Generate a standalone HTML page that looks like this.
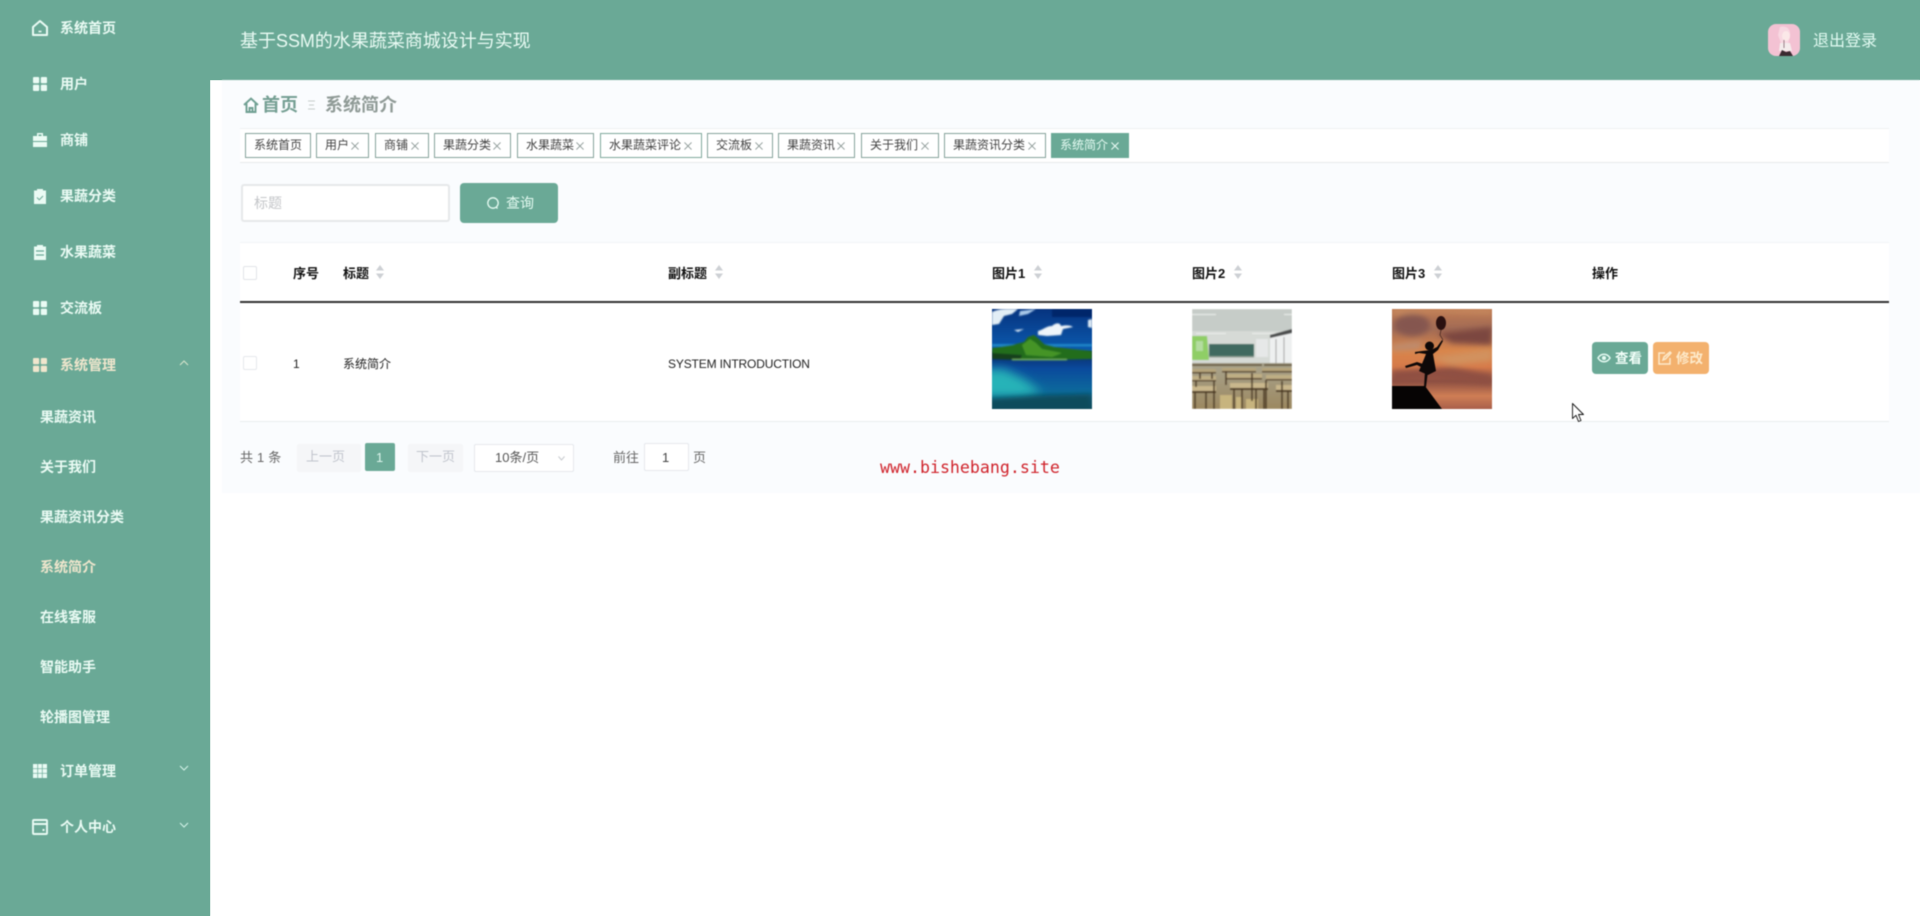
<!DOCTYPE html>
<html lang="zh-CN">
<head>
<meta charset="utf-8">
<title>基于SSM的水果蔬菜商城设计与实现</title>
<style>
html,body{margin:0;padding:0;width:1920px;height:916px;overflow:hidden;background:#fff}
body{position:relative;font-family:"Liberation Sans","Noto Sans CJK SC",sans-serif;color:#333}
#w{position:absolute;left:0;top:0;width:1920px;height:916px;filter:blur(.45px);overflow:hidden}
.a{position:absolute}
.t{position:absolute;white-space:nowrap;line-height:20px;height:20px}
.gs{left:0;top:0;width:210px;height:916px;background:#6aa996}
.gh{left:210px;top:0;width:1710px;height:80px;background:#6aa996}
#bg{left:222px;top:80px;width:1698px;height:413px;background:#fafcfe}
.m{left:60px;font-size:14px;font-weight:700;color:#eafbf4}
.s{left:40px;font-size:14px;font-weight:700;color:#eafbf4}
.i{position:absolute;left:32px;width:16px;height:16px;overflow:visible}
.tag{position:absolute;top:133px;height:23px;border:1px solid #86a29b;background:#fff;font-size:12px;line-height:23px;color:#444;padding-left:8px;white-space:nowrap;box-sizing:content-box}
.tag svg{position:absolute;right:9px;top:8px;width:8px;height:8px}
.th{font-size:13px;font-weight:700;color:#111}
.sort{position:absolute;width:8px;height:14px}
.td{font-size:12px;color:#222}
.pg{font-size:13px}
</style>
</head>
<body>
<div class="a gs"></div>
<div class="a gh"></div>
<div id="w">
<div id="bg" class="a"></div>
<div class="a gs"></div>
<div class="a gh"></div>

<!-- sidebar icons -->
<svg class="i" style="top:20px" viewBox="0 0 16 16" fill="none" stroke="#eafbf4" stroke-width="2"><path d="M1 7 8 1l7 6v8H1z" stroke-linejoin="round"/><path d="M6.500 11.500h3" stroke-width="1.500"/></svg>
<svg class="i" style="top:76px" viewBox="0 0 16 16" fill="#eafbf4"><rect x="1" y="1" width="6.200" height="6.200" rx="1"/><rect x="8.800" y="1" width="6.200" height="6.200" rx="1"/><rect x="1" y="8.800" width="6.200" height="6.200" rx="1"/><rect x="8.800" y="8.800" width="6.200" height="6.200" rx="1"/></svg>
<svg class="i" style="top:132px" viewBox="0 0 16 16" fill="#eafbf4"><path d="M5 1h6v3h-1.500V2.500h-3V4H5z"/><rect x="1" y="4" width="14" height="5"/><rect x="1" y="10" width="14" height="5"/></svg>
<svg class="i" style="top:188px" viewBox="0 0 16 16"><path d="M2 2.500h3V1h6v1.500h3V16H2z" fill="#eafbf4"/><path d="M5 9.500l2.300 2.300L11 8" stroke="#6aa996" stroke-width="1" fill="none"/></svg>
<svg class="i" style="top:244px" viewBox="0 0 16 16"><path d="M2 2.500h3V1h6v1.500h3V16H2z" fill="#eafbf4"/><path d="M4 7h8M4 11h8" stroke="#6aa996" stroke-width="1.300" fill="none"/></svg>
<svg class="i" style="top:300px" viewBox="0 0 16 16" fill="#eafbf4"><rect x="1" y="1" width="6.200" height="6.200" rx="1"/><rect x="8.800" y="1" width="6.200" height="6.200" rx="1"/><rect x="1" y="8.800" width="6.200" height="6.200" rx="1"/><rect x="8.800" y="8.800" width="6.200" height="6.200" rx="1"/></svg>
<svg class="i" style="top:357px" viewBox="0 0 16 16" fill="#efe6cd"><rect x="1" y="1" width="6.200" height="6.200" rx="1"/><rect x="8.800" y="1" width="6.200" height="6.200" rx="1"/><rect x="1" y="8.800" width="6.200" height="6.200" rx="1"/><rect x="8.800" y="8.800" width="6.200" height="6.200" rx="1"/></svg>
<svg class="i" style="top:763px" viewBox="0 0 16 16" fill="#eafbf4"><rect x="1" y="1" width="14" height="14"/><path d="M1 5.700h14M1 10.300h14M5.700 1v14M10.300 1v14" stroke="#6aa996" stroke-width=".7"/></svg>
<svg class="i" style="top:819px" viewBox="0 0 16 16" fill="none" stroke="#eafbf4" stroke-width="1.900"><rect x="1" y="1" width="14" height="14" rx="1"/><path d="M1 5h14M10.500 11h2"/></svg>

<!-- sidebar labels -->
<div class="t m" style="top:18px">系统首页</div>
<div class="t m" style="top:74px">用户</div>
<div class="t m" style="top:130px">商铺</div>
<div class="t m" style="top:186px">果蔬分类</div>
<div class="t m" style="top:242px">水果蔬菜</div>
<div class="t m" style="top:298px">交流板</div>
<div class="t m" style="top:355px;color:#efe6cd">系统管理</div>
<div class="t s" style="top:407px">果蔬资讯</div>
<div class="t s" style="top:457px">关于我们</div>
<div class="t s" style="top:507px">果蔬资讯分类</div>
<div class="t s" style="top:557px;color:#efe6cd">系统简介</div>
<div class="t s" style="top:607px">在线客服</div>
<div class="t s" style="top:657px">智能助手</div>
<div class="t s" style="top:707px">轮播图管理</div>
<div class="t m" style="top:761px">订单管理</div>
<div class="t m" style="top:817px">个人中心</div>
<svg class="a" style="left:179px;top:360px" width="10" height="6" viewBox="0 0 10 6" fill="none" stroke="#d9e6cd" stroke-width="1"><path d="M1 5 5 1l4 4"/></svg>
<svg class="a" style="left:179px;top:765px" width="10" height="6" viewBox="0 0 10 6" fill="none" stroke="#d5f5ea" stroke-width="1"><path d="M1 1l4 4 4-4"/></svg>
<svg class="a" style="left:179px;top:822px" width="10" height="6" viewBox="0 0 10 6" fill="none" stroke="#d5f5ea" stroke-width="1"><path d="M1 1l4 4 4-4"/></svg>

<!-- header -->
<div class="t" style="left:240px;top:31px;font-size:18px;letter-spacing:-.02px;color:#eafbf4">基于SSM的水果蔬菜商城设计与实现</div>
<svg class="a" style="left:1768px;top:24px" width="32" height="32" viewBox="0 0 32 32">
<defs><clipPath id="av"><rect width="32" height="32" rx="8"/></clipPath></defs>
<g clip-path="url(#av)"><rect width="32" height="32" fill="#f3c2d3"/><path d="M12 3c7-2 11 3 10 9l-2 8-7-1-3-8z" fill="#f8d8e2"/><ellipse cx="18" cy="12" rx="4" ry="5" fill="#fbe8e8"/><path d="M12 19h10l2 8H11z" fill="#f4ecec"/><path d="M11 32l3-6 4 2 4-1 3 5z" fill="#3a2a30"/><path d="M16 16v8" stroke="#9a7f88" stroke-width="1"/></g></svg>
<div class="t" style="left:1813px;top:32px;font-size:16px;color:#e2fbf2">退出登录</div>

<!-- breadcrumb -->
<svg class="a" style="left:243px;top:97px" width="16" height="16" viewBox="0 0 16 16" fill="none" stroke="#6f9f92" stroke-width="1.900"><path d="M1 8 8 1.500 15 8M3.500 6.500V15h9V6.500M6.500 15v-4h3v4"/></svg>
<div class="t" style="left:262px;top:95px;font-size:18px;font-weight:700;color:#759f93">首页</div>
<svg class="a" style="left:307px;top:100px" width="9" height="10" viewBox="0 0 9 10" stroke="#c6cdcb" stroke-width="1"><path d="M1 1h7M2 5h5M1 9h7"/></svg>
<div class="t" style="left:325px;top:95px;font-size:18px;font-weight:700;color:#8f9a96">系统简介</div>

<!-- tabs -->
<div class="a" style="left:240px;top:128px;width:1649px;height:33px;background:#fff;border-top:1px solid #eef0f2;border-bottom:1px solid #e6e9eb"></div>
<div class="tag" style="left:245px;width:56px">系统首页</div>
<div class="tag" style="left:316px;width:43px">用户<svg viewBox="0 0 9 9" stroke="#8c9896"><path d="M.5.500l8 8M8.500.500l-8 8"/></svg></div>
<div class="tag" style="left:375px;width:44px">商铺<svg viewBox="0 0 9 9" stroke="#8c9896"><path d="M.5.500l8 8M8.500.500l-8 8"/></svg></div>
<div class="tag" style="left:434px;width:67px">果蔬分类<svg viewBox="0 0 9 9" stroke="#8c9896"><path d="M.5.500l8 8M8.500.500l-8 8"/></svg></div>
<div class="tag" style="left:517px;width:67px">水果蔬菜<svg viewBox="0 0 9 9" stroke="#8c9896"><path d="M.5.500l8 8M8.500.500l-8 8"/></svg></div>
<div class="tag" style="left:600px;width:92px;border-color:#7fa89c">水果蔬菜评论<svg viewBox="0 0 9 9" stroke="#8c9896"><path d="M.5.500l8 8M8.500.500l-8 8"/></svg></div>
<div class="tag" style="left:707px;width:56px">交流板<svg viewBox="0 0 9 9" stroke="#8c9896"><path d="M.5.500l8 8M8.500.500l-8 8"/></svg></div>
<div class="tag" style="left:778px;width:67px">果蔬资讯<svg viewBox="0 0 9 9" stroke="#8c9896"><path d="M.5.500l8 8M8.500.500l-8 8"/></svg></div>
<div class="tag" style="left:861px;width:68px">关于我们<svg viewBox="0 0 9 9" stroke="#8c9896"><path d="M.5.500l8 8M8.500.500l-8 8"/></svg></div>
<div class="tag" style="left:944px;width:92px">果蔬资讯分类<svg viewBox="0 0 9 9" stroke="#8c9896"><path d="M.5.500l8 8M8.500.500l-8 8"/></svg></div>
<div class="tag" style="left:1051px;width:68px;background:#6aa996;border-color:#6aa996;color:#e5fbf2">系统简介<svg viewBox="0 0 9 9" stroke="#eafbf4" stroke-width="1.200"><path d="M.5.500l8 8M8.500.500l-8 8"/></svg></div>

<!-- search -->
<div class="a" style="left:241px;top:184px;width:209px;height:38px;box-sizing:border-box;background:#fff;border:2px solid #e6e8ea;border-radius:3px"></div>
<div class="t" style="left:254px;top:193px;font-size:14px;color:#c4c6c9">标题</div>
<div class="a" style="left:460px;top:183px;width:98px;height:40px;background:#6aa996;border-radius:4px"></div>
<svg class="a" style="left:486px;top:196px" width="14" height="14" viewBox="0 0 14 14" fill="none" stroke="#e5fbf2" stroke-width="1.300"><circle cx="7" cy="7" r="5.200"/><path d="M10 11l1.500 1.500"/></svg>
<div class="t" style="left:506px;top:193px;font-size:14px;color:#e5fbf2">查询</div>

<!-- table -->
<div class="a" style="left:240px;top:242px;width:1649px;height:180px;background:#fff;border-top:1px solid #f2f4f6;border-bottom:1px solid #e9ecee;box-sizing:border-box"></div>
<div class="a" style="left:240px;top:301px;width:1649px;height:2px;background:#333"></div>
<div class="a" style="left:243px;top:266px;width:14px;height:14px;border:1px solid #e2e4e8;box-sizing:border-box;border-radius:2px;background:#fff"></div>
<div class="t th" style="left:293px;top:264px">序号</div>
<div class="t th" style="left:343px;top:264px">标题</div>
<div class="t th" style="left:668px;top:264px">副标题</div>
<div class="t th" style="left:992px;top:264px">图片1</div>
<div class="t th" style="left:1192px;top:264px">图片2</div>
<div class="t th" style="left:1392px;top:264px">图片3</div>
<div class="t th" style="left:1592px;top:264px">操作</div>
<svg class="sort" style="left:376px;top:265px" viewBox="0 0 8 14" fill="#cdd0d4"><path d="M4 0l4 5.500H0zM4 14 0 8.500h8z"/></svg>
<svg class="sort" style="left:715px;top:265px" viewBox="0 0 8 14" fill="#cdd0d4"><path d="M4 0l4 5.500H0zM4 14 0 8.500h8z"/></svg>
<svg class="sort" style="left:1034px;top:265px" viewBox="0 0 8 14" fill="#cdd0d4"><path d="M4 0l4 5.500H0zM4 14 0 8.500h8z"/></svg>
<svg class="sort" style="left:1234px;top:265px" viewBox="0 0 8 14" fill="#cdd0d4"><path d="M4 0l4 5.500H0zM4 14 0 8.500h8z"/></svg>
<svg class="sort" style="left:1434px;top:265px" viewBox="0 0 8 14" fill="#cdd0d4"><path d="M4 0l4 5.500H0zM4 14 0 8.500h8z"/></svg>

<div class="a" style="left:243px;top:356px;width:14px;height:14px;border:1px solid #e6e8ec;box-sizing:border-box;border-radius:2px;background:#fff"></div>
<div class="t td" style="left:293px;top:354px">1</div>
<div class="t td" style="left:343px;top:354px">系统简介</div>
<div class="t td" style="left:668px;top:354px;letter-spacing:-.15px">SYSTEM INTRODUCTION</div>

<!-- image 1 -->
<svg class="a" style="left:992px;top:309px" width="100" height="100" viewBox="0 0 100 100">
<defs><filter id="b1" x="-5%" y="-5%" width="110%" height="110%"><feGaussianBlur stdDeviation=".8"/></filter>
<filter id="b2" x="-30%" y="-30%" width="160%" height="160%"><feGaussianBlur stdDeviation="5"/></filter>
<filter id="b4" x="-20%" y="-20%" width="140%" height="140%"><feGaussianBlur stdDeviation="3"/></filter>
<linearGradient id="sky" x1="0" y1="0" x2="0" y2="1"><stop offset="0" stop-color="#06337f"/><stop offset="1" stop-color="#0c5cb0"/></linearGradient>
<linearGradient id="sea" x1="0" y1="0" x2="0" y2="1"><stop offset="0" stop-color="#0a2a64"/><stop offset=".3" stop-color="#0a4a9c"/><stop offset=".7" stop-color="#0d6a9c"/><stop offset="1" stop-color="#0a5366"/></linearGradient>
<clipPath id="c100"><rect width="100" height="100"/></clipPath></defs>
<g clip-path="url(#c100)">
<rect width="100" height="42" fill="url(#sky)"/>
<rect y="42" width="100" height="58" fill="url(#sea)"/>
<g filter="url(#b2)"><path d="M-10 60 12 60 32 70 50 84 30 88-10 88z" fill="#25b3b8"/></g>
<g filter="url(#b4)"><path d="M-5 90 40 87 100 85V110H-5z" fill="#084c5c"/></g>
<g filter="url(#b1)">
<rect x="60" width="40" height="8" fill="#05286a"/>
<path d="M0 3c8-4 18-3 26-3l-6 5-8 2-5 8-7 1z" fill="#e2eef6"/>
<path d="M28 2l16-2-8 5-9 2z" fill="#a8c8e8"/>
<path d="M46 22c5-1 8-5 14-5 3-3 8-4 9 0 5-1 9-1 12 1l-10 2-2 6-14 1-9-1z" fill="#eef5fa"/>
<path d="M22 21l10-1-6 3zM96 11l4-1v9l-4-1z" fill="#dbe8f4"/>
<rect y="35" width="100" height="2.500" fill="#1a86c8"/>
<path d="M0 39 20 36 32 33 36 28 42 26 47 30 52 35 64 38 80 40 100 42V50L60 51 30 51 0 48z" fill="#246d1f"/>
<path d="M30 36 38 30 44 34 50 40 70 44 60 48 34 46z" fill="#459428"/>
<path d="M0 44 30 46 28 51 0 50z" fill="#133f1e"/>
<rect x="20" y="50" width="55" height="1.300" fill="#7aba60"/>
</g></g></svg>

<!-- image 2 -->
<svg class="a" style="left:1192px;top:309px" width="100" height="100" viewBox="0 0 100 100">
<defs><linearGradient id="fl" x1="0" y1="0" x2="0" y2="1"><stop offset="0" stop-color="#a9a48e"/><stop offset="1" stop-color="#9c8860"/></linearGradient>
<filter id="b3" x="-5%" y="-5%" width="110%" height="110%"><feGaussianBlur stdDeviation=".5"/></filter></defs>
<g clip-path="url(#c100)"><g filter="url(#b3)">
<rect width="100" height="55" fill="#d6dad6"/>
<rect width="100" height="22" fill="#c6ccc8"/>
<path d="M0 5h24v1H0zM92 5h8v1h-8zM4 24h30v1H4zM60 24h24v1H60z" fill="#eef0ee"/>
<path d="M0 27h15l2 24H0z" fill="#8fce66"/>
<path d="M4 32h7v10H4z" fill="#b4dca0"/>
<rect x="17" y="35" width="45" height="12" fill="#3f6a60"/>
<rect x="17" y="47" width="45" height="1.500" fill="#8a9a90"/>
<path d="M78 28l22-6v34H78z" fill="#eef0f0"/>
<path d="M78 26l22-6v4l-22 5z" fill="#4a4c4c"/>
<path d="M84 30v24M92 28v26" stroke="#9a9c9c" stroke-width="1"/>
<rect x="64" y="30" width="12" height="18" fill="#e6e8e8"/>
<rect y="54" width="100" height="46" fill="url(#fl)"/>
<path d="M0 55h36v2H0zM32 55h38v2H32zM72 55h28v2H72z" fill="#6e6248"/>
<path d="M0 60h24v3H0zM30 59h34v3H30zM70 59h30v3H70z" fill="#b5a47c"/>
<path d="M0 63h24v1.500H0zM30 62h34v1.500H30zM70 62h30v1.500H70z" fill="#5c4a30"/>
<path d="M0 67h24v4H0zM34 65h36v4H34zM74 66h26v4H74z" fill="#bfae84"/>
<path d="M0 71h24v1.500H0zM34 69h36v1.500H34zM74 70h26v1.500H74z" fill="#5c4a30"/>
<path d="M0 77h24v5H0zM38 74h38v5H38zM84 76h16v5H84z" fill="#c9b78c"/>
<path d="M0 82h24v2H0zM38 79h38v2H38zM84 81h16v2H84z" fill="#503e26"/>
<path d="M44 88h6v12h-6zM28 86h12v14H28zM54 90h12v10H54z" fill="#c7b47e"/>
<path d="M8 64v6M20 64v6M4 72v6M22 72v28M34 62v14M60 64v28M42 81v19M72 81v19M74 71v29M90 72v28M96 83v17M14 84v16M3 84v16M50 81v19M64 81v19" stroke="#4a3820" stroke-width="1.500"/>
</g></g></svg>

<!-- image 3 -->
<svg class="a" style="left:1392px;top:309px" width="100" height="100" viewBox="0 0 100 100">
<defs><linearGradient id="sun" x1="0" y1="0" x2="0" y2="1"><stop offset="0" stop-color="#bf7a52"/><stop offset=".2" stop-color="#a26c56"/><stop offset=".42" stop-color="#d9854a"/><stop offset=".58" stop-color="#d67a4a"/><stop offset=".72" stop-color="#8c4f42"/><stop offset=".87" stop-color="#cf7e55"/><stop offset="1" stop-color="#a95f4a"/></linearGradient></defs>
<g clip-path="url(#c100)">
<rect width="100" height="100" fill="url(#sun)"/>
<g filter="url(#b4)">
<ellipse cx="20" cy="16" rx="18" ry="11" fill="#85564f"/>
<path d="M45 24 100 18V36L60 34z" fill="#7c4640"/>
<path d="M0 36 30 32 28 40 0 42z" fill="#bd8c70"/>
<path d="M0 0H100V5L40 3 0 6z" fill="#c68a60"/>
<path d="M36 48 100 40V52L60 56z" fill="#d1925f"/>
<path d="M0 62 60 58 100 66V76L40 70 0 74z" fill="#8f5043"/>
</g>
<ellipse cx="49" cy="14" rx="5" ry="7" fill="#2a1010"/>
<path d="M49 21 48 26 51 31" stroke="#2a1212" stroke-width=".6" fill="none"/>
<circle cx="37.500" cy="37" r="4.500" fill="#0e0808"/>
<path d="M39 41 45 38 50 31 51 32 46 41 41 45 44 62 36 66 27 62 32 50 34 45 27 44 23 45 23 43 30 42z" fill="#0e0808"/>
<path d="M33 60 25 56 14 59 13 57 25 53 34 56z" fill="#0e0808"/>
<path d="M33 62 36 62 34 78 32 78z" fill="#0e0808"/>
<path d="M0 77H33L50 100H0z" fill="#060404"/>
</g></svg>

<!-- action buttons -->
<div class="a" style="left:1592px;top:342px;width:56px;height:32px;background:#6aa996;border-radius:4px"></div>
<div class="a" style="left:1653px;top:342px;width:56px;height:32px;background:#f3b16e;border-radius:4px"></div>
<svg class="a" style="left:1597px;top:353px" width="14" height="10" viewBox="0 0 14 10" fill="none" stroke="#e5fbf2" stroke-width="1.500"><path d="M1 5c3-5 9-5 12 0-3 5-9 5-12 0z"/><circle cx="7" cy="5" r="1.300" fill="#e5fbf2"/></svg>
<div class="t" style="left:1615px;top:349px;font-size:13.500px;font-weight:700;color:#f2fff9">查看</div>
<svg class="a" style="left:1658px;top:351px" width="14" height="14" viewBox="0 0 14 14" fill="none" stroke="#fdeacb" stroke-width="1.500"><path d="M12 7v6H1V2h6"/><path d="M5 9l1-3 6-5 1 1-5.500 6z"/></svg>
<div class="t" style="left:1676px;top:349px;font-size:13.500px;font-weight:700;color:#fdeacb">修改</div>

<!-- cursor -->
<svg class="a" style="left:1572px;top:403px" width="13" height="20" viewBox="0 0 13 20"><path d="M.5.500V15.500L4 12.300 6.500 18.500 9 17.500 6.500 11.500H11.500z" fill="#fff" stroke="#111" stroke-width=".9" stroke-linejoin="round"/></svg>

<!-- pagination -->
<div class="t pg" style="left:240px;top:448px;color:#666;letter-spacing:.2px">共 1 条</div>
<div class="a" style="left:297px;top:444px;width:64px;height:28px;background:#f5f6f8;border-radius:2px"></div>
<div class="t pg" style="left:306px;top:447px;color:#c0c4cc">上一页</div>
<div class="a" style="left:365px;top:443px;width:30px;height:28px;background:#6aa996;border-radius:2px"></div>
<div class="t pg" style="left:376px;top:448px;color:#dcf5ec">1</div>
<div class="a" style="left:408px;top:444px;width:55px;height:28px;background:#f5f6f8;border-radius:2px"></div>
<div class="t pg" style="left:416px;top:447px;color:#c0c4cc">下一页</div>
<div class="a" style="left:474px;top:444px;width:100px;height:28px;background:#fff;border:1px solid #e6e8ec;box-sizing:border-box;border-radius:2px"></div>
<div class="t pg" style="left:495px;top:448px;color:#555">10条/页</div>
<svg class="a" style="left:558px;top:456px" width="7" height="5" viewBox="0 0 7 5" fill="none" stroke="#c6c9ce" stroke-width="1"><path d="M.5.500 3.500 4 6.500.500"/></svg>
<div class="t pg" style="left:613px;top:448px;color:#666">前往</div>
<div class="a" style="left:644px;top:443px;width:45px;height:28px;background:#fff;border:1px solid #e6e8ec;box-sizing:border-box;border-radius:2px"></div>
<div class="t pg" style="left:662px;top:448px;color:#444">1</div>
<div class="t pg" style="left:693px;top:448px;color:#666">页</div>

<div class="t" style="left:880px;top:458px;font-family:'DejaVu Sans Mono',monospace;font-size:16.600px;color:#d0242c">www.bishebang.site</div>
</div>
</body>
</html>
